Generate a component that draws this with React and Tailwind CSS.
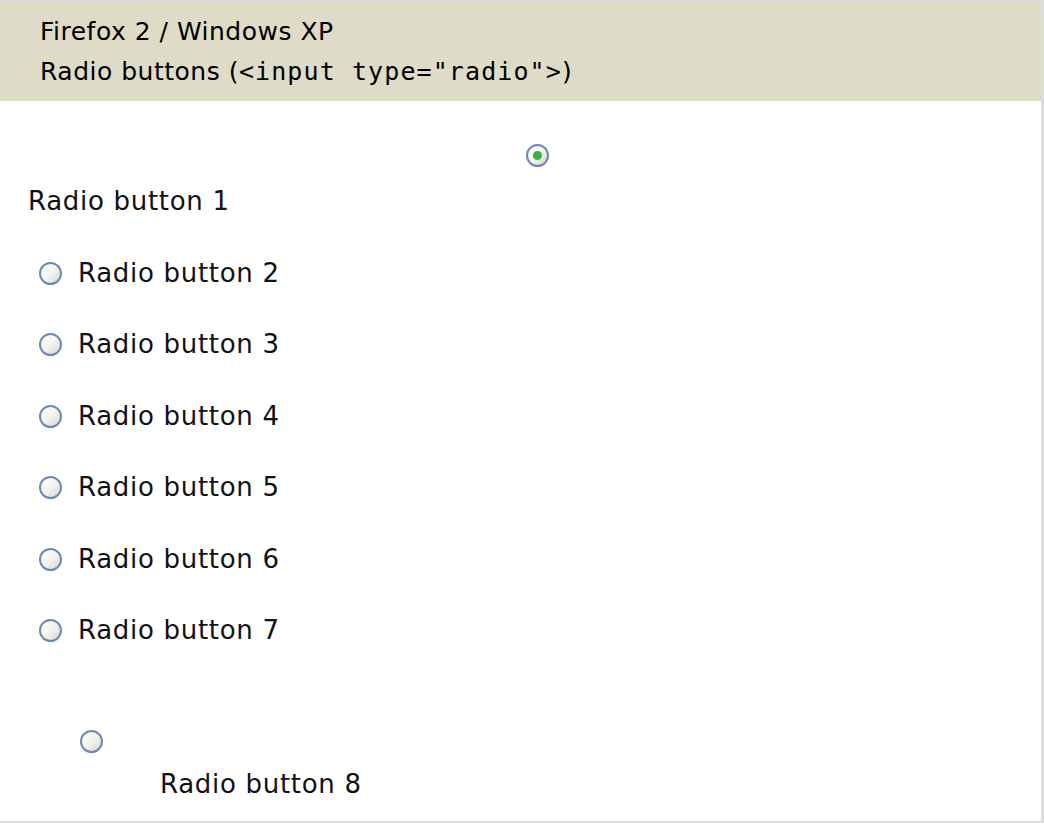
import React from 'react';

const sans = { fontFamily: '"DejaVu Sans", "Liberation Sans", sans-serif' };
const mono = { fontFamily: '"DejaVu Sans Mono", "Liberation Mono", monospace' };

function Radio({ checked }) {
  return (
    <span className="inline-flex h-[23px] w-[23px] shrink-0 items-center justify-center rounded-full border-2 border-[#6a8ab6] bg-gradient-to-br from-[#ffffff] via-[#f3f3ef] to-[#d6d6d0]">
      {checked && <span className="h-[9px] w-[9px] rounded-full bg-[#3fae3f]" />}
    </span>
  );
}

function Row({ n }) {
  return (
    <div className="flex h-[71.5px] items-center pl-[39px]">
      <Radio />
      <span className="ml-[16px] text-[26px] tracking-[0.7px] text-[#111]">Radio button {n}</span>
    </div>
  );
}

export default function App() {
  return (
    <div className="h-[826px] w-[1044px] bg-white">
      <div className="h-[823px] w-[1044px] border-t-2 border-r-[3px] border-b-2 border-[#dcdcdc]" style={sans}>
        {/* cabecera */}
        <div className="flex h-[99px] flex-col justify-center bg-[#dedcc6] pl-[40px] text-[25px] leading-[40px] tracking-[0.5px] text-black">
          <div>Firefox 2 / Windows XP</div>
          <div>
            Radio buttons (<span className="tracking-[1.1px]" style={mono}>&lt;input type="radio"&gt;</span>)
          </div>
        </div>

        <div className="flex h-[65px] pt-[43px] pl-[526px]">
          <Radio checked />
        </div>
        <div className="flex h-[71.5px] items-center pl-[28px] text-[26px] tracking-[0.7px] text-[#111]">Radio button 1</div>
        {[2, 3, 4, 5, 6, 7].map((n) => (
          <Row key={n} n={n} />
        ))}

        <div className="flex pt-[63px] pl-[80px]">
          <Radio />
        </div>
        <div className="flex h-[63px] items-center pl-[160px] text-[26px] tracking-[0.7px] text-[#111]">Radio button 8</div>
      </div>
    </div>
  );
}
